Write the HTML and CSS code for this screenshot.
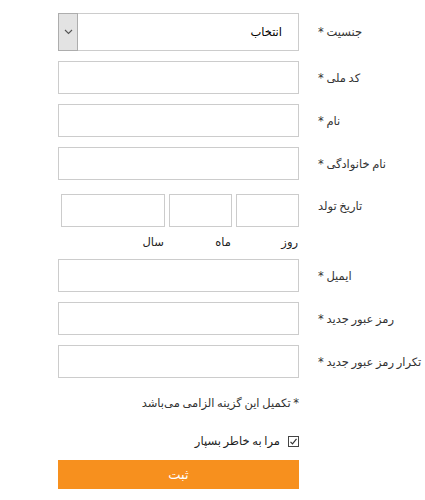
FILE: index.html
```html
<!DOCTYPE html>
<html lang="fa" dir="rtl">
<head>
    <meta charset="UTF-8">
    <meta name="viewport" content="width=device-width, initial-scale=1.0">
    <title>ثبت نام</title>
    <link rel="stylesheet" href="styles.css">
</head>
<body>
    <form class="register-form">
        <div class="form-row row-select">
            <label class="field-label">جنسیت *</label>
            <div class="select-box">
                <span class="select-value">انتخاب</span>
                <span class="select-arrow">
                    <svg width="9" height="6" viewBox="0 0 9 6"><path d="M1 1l3.5 3.5L8 1" fill="none" stroke="#555" stroke-width="1.1"/></svg>
                </span>
            </div>
        </div>

        <div class="form-row">
            <label class="field-label">کد ملی *</label>
            <input type="text" class="text-input">
        </div>

        <div class="form-row">
            <label class="field-label">نام *</label>
            <input type="text" class="text-input">
        </div>

        <div class="form-row">
            <label class="field-label">نام خانوادگی *</label>
            <input type="text" class="text-input">
        </div>

        <div class="form-row row-date">
            <label class="field-label date-label">تاریخ تولد</label>
            <div class="date-group">
                <div class="date-part part-day">
                    <input type="text" class="text-input">
                    <span class="date-caption">روز</span>
                </div>
                <div class="date-part part-month">
                    <input type="text" class="text-input">
                    <span class="date-caption">ماه</span>
                </div>
                <div class="date-part part-year">
                    <input type="text" class="text-input">
                    <span class="date-caption">سال</span>
                </div>
            </div>
        </div>

        <div class="form-row">
            <label class="field-label">ایمیل *</label>
            <input type="text" class="text-input">
        </div>

        <div class="form-row">
            <label class="field-label">رمز عبور جدید *</label>
            <input type="password" class="text-input">
        </div>

        <div class="form-row">
            <label class="field-label">تکرار رمز عبور جدید *</label>
            <input type="password" class="text-input">
        </div>

        <div class="form-footer">
            <p class="required-note">* تکمیل این گزینه الزامی می‌باشد</p>
            <label class="remember">
                <span class="check-box">
                    <svg width="9" height="9" viewBox="0 0 9 9"><path d="M1.5 4.8l2 2 4-5" fill="none" stroke="#333" stroke-width="1.2"/></svg>
                </span>
                مرا به خاطر بسپار
            </label>
            <button type="submit" class="submit-btn">ثبت</button>
        </div>
    </form>
</body>
</html>
```

FILE: styles.css
```css
body {
    margin: 0;
    padding: 13px 0 0 58px;
    background: #fff;
    font-family: "DejaVu Sans", sans-serif;
    font-size: 11.5px;
    word-spacing: -1px;
    color: #333;
    overflow: hidden;
}
.register-form {
    direction: rtl;
}
.form-row {
    display: grid;
    grid-template-columns: minmax(0, 1fr) 241px;
    column-gap: 19px;
    align-items: center;
    margin-bottom: 10px;
}
.field-label {
    display: flex;
    justify-content: flex-end;
    white-space: nowrap;
}
.text-input {
    box-sizing: border-box;
    width: 100%;
    height: 33px;
    margin: 0;
    border: 1px solid #ccc;
    background: #fff;
    padding: 0 8px;
    font: inherit;
}
.select-box {
    box-sizing: border-box;
    height: 38px;
    border: 1px solid #ccc;
    display: flex;
    align-items: stretch;
}
.select-value {
    flex: 1;
    display: flex;
    align-items: center;
    padding-right: 16px;
    color: #000;
}
.select-arrow {
    width: 18px;
    background: #e3e3e3;
    border: 1px solid #adadad;
    margin: -1px;
    display: flex;
    align-items: center;
    justify-content: center;
}
.row-date {
    margin-top: 14px;
    align-items: start;
    margin-bottom: 0;
}
.date-label {
    padding-top: 5px;
}
.date-group {
    display: flex;
    gap: 4px;
    margin-left: 3px;
}
.part-day, .part-month {
    width: 63px;
}
.part-year {
    width: 104px;
}
.date-caption {
    display: block;
    margin-top: 6px;
    margin-bottom: 7px;
    line-height: 19px;
    padding-right: 1px;
    color: #222;
}
.form-footer {
    width: 241px;
    margin-left: 0;
    margin-right: auto;
}
.required-note {
    margin: 15px 0 0;
    line-height: 20px;
}
.remember {
    display: flex;
    align-items: center;
    gap: 8px;
    margin-top: 18px;
    line-height: 20px;
    color: #222;
}
.check-box {
    box-sizing: border-box;
    width: 11px;
    height: 11px;
    border: 1px solid #444;
    display: flex;
    align-items: center;
    justify-content: center;
}
.submit-btn {
    display: block;
    width: 100%;
    height: 29px;
    margin-top: 9px;
    border: none;
    background: #f7901e;
    color: #fff;
    font: inherit;
    font-size: 13px;
    cursor: pointer;
}
```
